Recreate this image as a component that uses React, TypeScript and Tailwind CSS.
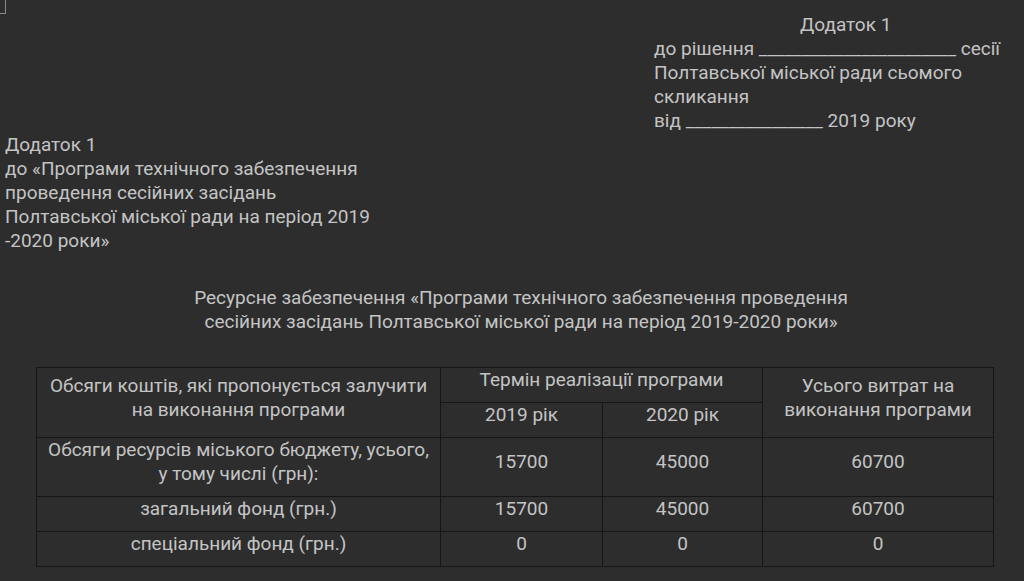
const ROWS = [
  { label: ['Обсяги ресурсів міського бюджету, усього,', 'у тому числі (грн):'], y2019: '15700', y2020: '45000', total: '60700' },
  { label: ['загальний фонд (грн.)'], y2019: '15700', y2020: '45000', total: '60700' },
  { label: ['спеціальний фонд (грн.)'], y2019: '0', y2020: '0', total: '0' },
];

const cell = 'border border-[#161616] text-center align-middle pb-[10px] px-1 font-normal whitespace-nowrap';

export default function App() {
  return (
    <div className="relative min-h-[581px] w-[1024px] bg-[#2d2d2d] text-[#c4c4c4] text-[19px] leading-[24px] font-['Roboto',sans-serif] overflow-hidden">
      {/* corner mark */}
      <div className="absolute left-0 top-0 w-[6px] h-[14px] border-r border-b border-[#8a8a8a]" />

      {/* top right approval block */}
      <div className="pt-[13px] ml-[654px] w-[370px] whitespace-nowrap">
        <p className="pl-[146px]">Додаток 1</p>
        <p>до рішення _______________________ сесії</p>
        <p>Полтавської міської ради сьомого</p>
        <p>скликання</p>
        <p>від ________________ 2019 року</p>
      </div>

      {/* left program block */}
      <div className="pl-[5px] whitespace-nowrap">
        <p>Додаток 1</p>
        <p>до «Програми технічного забезпечення</p>
        <p>проведення сесійних засідань</p>
        <p>Полтавської міської ради на період 2019</p>
        <p>-2020 роки»</p>
      </div>

      {/* title */}
      <div className="mt-[33px] text-center pl-[18px] whitespace-nowrap">
        <p>Ресурсне забезпечення «Програми технічного забезпечення проведення</p>
        <p>сесійних засідань Полтавської міської ради на період 2019-2020 роки»</p>
      </div>

      {/* table */}
      <table className="mt-[33px] ml-[36px] w-[957px] border-collapse table-fixed">
        <colgroup>
          <col className="w-[404px]" />
          <col className="w-[162px]" />
          <col className="w-[160px]" />
          <col className="w-[231px]" />
        </colgroup>
        <thead>
          <tr>
            <th rowSpan={2} className={cell}>
              Обсяги коштів, які пропонується залучити
              <br />
              на виконання програми
            </th>
            <th colSpan={2} className={cell}>Термін реалізації програми</th>
            <th rowSpan={2} className={cell}>
              Усього витрат на
              <br />
              виконання програми
            </th>
          </tr>
          <tr>
            <th className={cell}>2019 рік</th>
            <th className={cell}>2020 рік</th>
          </tr>
        </thead>
        <tbody>
          {ROWS.map((r, i) => (
            <tr key={i}>
              <td className={cell}>
                {r.label.map((l, j) => (
                  <div key={j}>{l}</div>
                ))}
              </td>
              <td className={cell}>{r.y2019}</td>
              <td className={cell}>{r.y2020}</td>
              <td className={cell}>{r.total}</td>
            </tr>
          ))}
        </tbody>
      </table>
    </div>
  );
}
